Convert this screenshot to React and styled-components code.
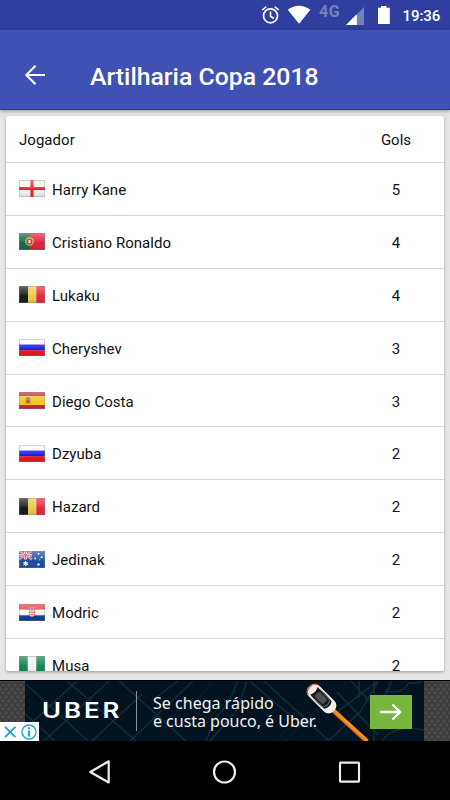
import React from "react";
import styled, { createGlobalStyle } from "styled-components";

const players = [
  { name: "Harry Kane", country: "england", goals: 5 },
  { name: "Cristiano Ronaldo", country: "portugal", goals: 4 },
  { name: "Lukaku", country: "belgium", goals: 4 },
  { name: "Cheryshev", country: "russia", goals: 3 },
  { name: "Diego Costa", country: "spain", goals: 3 },
  { name: "Dzyuba", country: "russia", goals: 2 },
  { name: "Hazard", country: "belgium", goals: 2 },
  { name: "Jedinak", country: "australia", goals: 2 },
  { name: "Modric", country: "croatia", goals: 2 },
  { name: "Musa", country: "nigeria", goals: 2 },
];

const flags = {
  england: (
    <>
      <rect width="26" height="17" fill="#f0f0f0" />
      <path d="M13 0v17M0 8.5h26" stroke="#f01c20" strokeWidth="3.2" />
    </>
  ),
  portugal: (
    <>
      <rect width="26" height="17" fill="#dc2038" />
      <rect width="10.5" height="17" fill="#106848" />
      <circle cx="10.5" cy="8.5" r="3.7" fill="none" stroke="#d8c04a" strokeWidth="1.3" />
      <path d="M8.5 6.3h4v3.2q0 2-2 2.3-2-.3-2-2.3z" fill="#d8283c" />
      <path d="M9.5 7.2h2v2.2l-1 1-1-1z" fill="#fff" />
    </>
  ),
  belgium: (
    <>
      <rect width="9" height="17" fill="#171717" />
      <rect x="9" width="8.3" height="17" fill="#ecca48" />
      <rect x="17.3" width="8.7" height="17" fill="#e52438" />
    </>
  ),
  russia: (
    <>
      <rect width="26" height="6" fill="#fbfbfb" />
      <rect y="5.5" width="26" height="6" fill="#1c1cec" />
      <rect y="11.3" width="26" height="5.7" fill="#ec1212" />
    </>
  ),
  spain: (
    <>
      <rect width="26" height="17" fill="#c8203a" />
      <rect y="4" width="26" height="9" fill="#f4c51e" />
      <path d="M6.3 7h5M7 6.5v5M11 6.5v5" stroke="#a98352" />
      <path d="M7.5 7.5h3V10q0 1.4-1.5 1.7Q7.5 11.4 7.5 10z" fill="#b8483c" />
      <path d="M7.8 6h2.5" stroke="#b8483c" strokeWidth="1.4" />
    </>
  ),
  australia: (
    <>
      <rect width="26" height="17" fill="#1c4c9c" />
      <path d="M0 0l13 8.5M13 0L0 8.5" stroke="#f1d6dc" strokeWidth="1.8" />
      <path d="M6.5 0v8.5M0 4.2h13" stroke="#f5e3e7" strokeWidth="2.6" />
      <path d="M6.5 0v8.5M0 4.2h13M0 0l13 8.5M13 0L0 8.5" stroke="#e0455a" strokeWidth="1" />
      <path d="M6.5 9.6l.8 1.7 1.8-.4-.8 1.6 1.2 1.3-1.8.1-.8 1.6-1-1.5-1.8.2.9-1.5-1.1-1.4 1.8-.1z" fill="#fff" />
      <circle cx="19.5" cy="2.8" r="1" fill="#e8f0ff" />
      <circle cx="16.2" cy="7.5" r="1" fill="#e8f0ff" />
      <circle cx="22.7" cy="6.2" r="1" fill="#e8f0ff" />
      <circle cx="20.7" cy="8.8" r=".6" fill="#e8f0ff" />
      <circle cx="19.5" cy="13.5" r="1.2" fill="#e8f0ff" />
    </>
  ),
  croatia: (
    <>
      <rect width="26" height="6" fill="#ed3a37" />
      <rect y="5.6" width="26" height="6" fill="#fafafa" />
      <rect y="11.3" width="26" height="5.7" fill="#103a94" />
      <path d="M10 5h6v5q-.5 2.5-3 3-2.5-.5-3-3z" fill="#f7dcdc" />
      <path d="M10.7 5v6M13 5v8M15.3 5v6" stroke="#e0343c" strokeWidth="1.3" strokeDasharray="1.4 1.1" />
      <path d="M9.5 4.5l1-1.5 1.3.8L13 2.7l1.2 1.1 1.3-.8 1 1.5z" fill="#7fa5c8" />
    </>
  ),
  nigeria: (
    <>
      <rect width="26" height="17" fill="#f0f0f0" />
      <rect width="8.7" height="17" fill="#12834e" />
      <rect x="17.3" width="8.7" height="17" fill="#12834e" />
    </>
  ),
};

function Flag({ country }) {
  return (
    <FlagIcon viewBox="0 0 26 17">
      <defs>
        <linearGradient id="gloss" x1="0" y1="0" x2="0" y2="1">
          <stop offset="0" stopColor="#fff" stopOpacity=".34" />
          <stop offset=".45" stopColor="#fff" stopOpacity=".12" />
          <stop offset=".6" stopColor="#fff" stopOpacity="0" />
          <stop offset="1" stopColor="#000" stopOpacity=".12" />
        </linearGradient>
      </defs>
      {flags[country]}
      <rect width="26" height="17" fill="url(#gloss)" />
      <rect x=".5" y=".5" width="25" height="16" fill="none" stroke="#888" strokeOpacity=".35" />
    </FlagIcon>
  );
}

function StatusIcons() {
  return (
    <svg width="150" height="30" viewBox="255 0 150 30" fill="none">
      <circle cx="270.5" cy="15.8" r="7" stroke="#fff" strokeWidth="1.7" />
      <path d="M262.3 10l4-3.4M278.7 10l-4-3.4M270.5 11.5v4.8l3.5 2.2" stroke="#fff" strokeWidth="1.6" />
      <path d="M287.7 9.7Q299 1.8 310.4 9.7L299 23.7z" fill="#fff" />
      <path d="M364 7v18h-18z" fill="#757fc0" />
      <path d="M356.8 14.3V25H346z" fill="#fff" />
      <path d="M379 7.8h2V6h5.5v1.8h3.3V24h-11.8V7.8z" fill="#fff" />
    </svg>
  );
}

function AdArt() {
  return (
    <MapArt viewBox="25 681 399 60" fill="none">
      <rect x="25" y="680" width="399" height="61" fill="#03131f" />
      <g stroke="#12313e" strokeWidth="1.3">
        <path d="M25 729l53-49M44 741l66-61M92 741l50-47M118 680l68 61M26 684l62 57M66 680l70 61M25 714l30 27M130 741l64-61M210 741l28-32 9-29M153 700l26-20" />
        <path d="M238 680q-8 24-23 39l-9 22M248 680l54 45M263 680l66 61M328 741l32-29 19-32M337 692l41 43M350 680l22 24M359 680v18M374 680v61M382 741q12-17 42-11M385 690q16 6 24-7h8l7-3M337 712l40-30M392 680l-10 22" />
      </g>
      <path d="M190 710l23-30M207 720l29-29M285 741l37-37M275 741l31-28M338 732h19v9M342 680l18 20" stroke="#0b222e" />
      <path d="M331.5 709l35 32" stroke="#b75c17" strokeWidth="4.6" />
      <path d="M331.5 708.500l36 32.500" stroke="#f98d26" strokeWidth="3.4" />
      <g transform="translate(321.6 698.600) rotate(45)">
        <rect x="-17.300" y="-7.500" width="34.600" height="15" rx="6.500" fill="#f3eeec" />
        <path d="M-12-7q-4.500 1-4.500 7t4.500 7" stroke="#e4502f" strokeWidth="1.2" />
        <path d="M-11-5.200Q-1-7 9-5.200q4 5.200 0 10.400Q-1 7-11 5.200-8 0-11-5.200z" fill="#191919" />
        <rect x="-7" y="-3.500" width="12" height="7" rx="2" fill="#4e4f51" />
        <path d="M7-4.500q3 4.500 0 9" stroke="#666" />
        <path d="M-9-5.600l16 .4M-9 5.600l16-.4" stroke="#ddd" strokeWidth=".6" />
      </g>
    </MapArt>
  );
}

export default function App() {
  return (
    <>
      <GlobalStyle />
      <Screen>
        <StatusBar>
          <Network>4G</Network>
          <StatusIcons />
          <Clock>19:36</Clock>
        </StatusBar>
        <AppBar>
          <svg width="22" height="22" viewBox="0 0 22 22" fill="none">
            <path d="M21 11H2.500M11.500 1.800L2.300 11l9.200 9.200" stroke="#fff" strokeWidth="2.1" />
          </svg>
          <Title>Artilharia Copa 2018</Title>
        </AppBar>
        <Content>
          <Card>
            <HeaderRow>
              <Label>Jogador</Label>
              <Goals>Gols</Goals>
            </HeaderRow>
            {players.map((player) => (
              <Row key={player.name}>
                <Flag country={player.country} />
                <Label>{player.name}</Label>
                <Goals>{player.goals}</Goals>
              </Row>
            ))}
          </Card>
        </Content>
        <Ad>
          <AdBanner>
            <AdArt />
            <Brand>UBER</Brand>
            <Divider />
            <Slogan>
              <SloganLine $spacing="0.03px">Se chega rápido</SloganLine>
              <SloganLine $spacing="-0.03px">e custa pouco, é Uber.</SloganLine>
            </Slogan>
            <AdButton>
              <svg width="24" height="18" viewBox="0 0 24 18" fill="none">
                <path d="M1 9h20M13.5 1.5L21 9l-7.5 7.5" stroke="#fff" strokeWidth="2.4" />
              </svg>
            </AdButton>
          </AdBanner>
          <AdChoices>
            <svg width="39" height="20" viewBox="0 0 39 20" fill="none" stroke="#12a5c7">
              <path d="M5 4.8l10.5 10.4M15.5 4.8L5 15.2" strokeWidth="1.7" />
              <circle cx="29" cy="10" r="7" strokeWidth="1.3" />
              <path d="M29 8.6v5.8M29 5.3v2" strokeWidth="2" />
            </svg>
          </AdChoices>
        </Ad>
        <NavBar>
          <svg width="24" height="26" viewBox="0 0 24 26" fill="none">
            <path d="M20.7 2.3v21.2L2.300 13z" stroke="#eee" strokeWidth="2.2" strokeLinejoin="round" />
          </svg>
          <svg width="26" height="26" viewBox="0 0 26 26" fill="none">
            <circle cx="12.5" cy="13" r="10.5" stroke="#eee" strokeWidth="2.2" />
          </svg>
          <svg width="24" height="26" viewBox="0 0 24 26" fill="none">
            <rect x="3" y="3.600" width="19" height="19" rx=".5" stroke="#eee" strokeWidth="2.1" />
          </svg>
        </NavBar>
      </Screen>
    </>
  );
}

const GlobalStyle = createGlobalStyle`
  * {
    box-sizing: border-box;
  }
  body {
    margin: 0;
    background: #000;
    font-family: Roboto, sans-serif;
  }
  svg {
    display: block;
    flex: none;
  }
`;
const Screen = styled.div`
  display: flex;
  flex-direction: column;
  width: 450px;
  height: 800px;
  overflow: hidden;
`;
const StatusBar = styled.div`
  position: relative;
  display: flex;
  justify-content: flex-end;
  height: 30px;
  padding-right: 10px;
  background: #303f9f;
`;
const Network = styled.span`
  position: absolute;
  left: 319px;
  top: 3px;
  color: #757fc0;
  font-size: 16px;
  line-height: 17px;
  font-weight: 700;
  letter-spacing: 0.6px;
`;
const Clock = styled.span`
  width: 38px;
  margin-left: -3px;
  color: #fff;
  font-size: 15px;
  line-height: 32px;
  font-weight: 500;
  letter-spacing: -0.1px;
  text-indent: 0.6px;
  white-space: nowrap;
`;
const AppBar = styled.header`
  position: relative;
  z-index: 1;
  display: flex;
  align-items: center;
  height: 80px;
  padding: 11px 0 0 24px;
  background: #3f51b5;
  border-bottom: 1px solid #1239a8;
  box-shadow: 0 1px 4px rgba(0, 0, 0, 0.35);
`;
const Title = styled.h1`
  margin: 3px 0 0 44px;
  color: #fff;
  font-size: 24.8px;
  font-weight: 500;
  line-height: 30px;
`;
const Content = styled.main`
  height: 570px;
  padding: 6px 6px 9px;
  background: #e6e6e6;
`;
const Card = styled.section`
  height: 555px;
  overflow: hidden;
  background: #fff;
  border-radius: 2px;
  box-shadow: 0 1px 3px rgba(0, 0, 0, 0.35);
`;
const Row = styled.div`
  display: flex;
  align-items: center;
  height: 52.9px;
  padding: 1px 13px 0;
  border-bottom: 1px solid #d5d5d5;
`;
const HeaderRow = styled(Row)`
  height: 47px;
`;
const FlagIcon = styled.svg`
  width: 26px;
  height: 17px;
  margin: 0 7px 1px 0;
`;
const Label = styled.span`
  flex: 1;
  padding-top: 1px;
  color: #111;
  font-size: 15px;
  line-height: 20px;
  letter-spacing: 0.04px;
`;
const Goals = styled.span`
  width: 70px;
  padding-top: 1px;
  color: #111;
  font-size: 15px;
  line-height: 20px;
  text-align: center;
`;
const Ad = styled.aside`
  position: relative;
  display: flex;
  justify-content: center;
  height: 61px;
  padding-right: 1px;
  background-color: #3b3b3b;
  background-image: radial-gradient(circle, #4c4c4c 1.2px, transparent 2.2px),
    radial-gradient(circle, #4c4c4c 1.2px, transparent 2.2px);
  background-size: 6px 8px;
  background-position: 0 0, 3px 4px;
  border-top: 1px solid #000;
`;
const AdBanner = styled.div`
  position: relative;
  display: flex;
  align-items: center;
  width: 399px;
  height: 60px;
`;
const MapArt = styled.svg`
  position: absolute;
  inset: 0;
  width: 399px;
  height: 60px;
`;
const Brand = styled.span`
  position: relative;
  width: 94px;
  margin-left: 17px;
  color: #fff;
  font: 600 21px/24px Inter, sans-serif;
  letter-spacing: 2.4px;
  transform: scaleX(1.23);
  transform-origin: left;
`;
const Divider = styled.span`
  position: relative;
  width: 1px;
  height: 40px;
  background: #899197;
`;
const Slogan = styled.div`
  position: relative;
  flex: 1;
  margin: 1px 0 0 16px;
`;
const SloganLine = styled.p`
  margin: 0;
  color: #f2f4f5;
  font: 400 16px/18px "Noto Sans", sans-serif;
  letter-spacing: ${(props) => props.$spacing};
  white-space: nowrap;
`;
const AdButton = styled.div`
  position: relative;
  display: flex;
  align-items: center;
  justify-content: center;
  width: 42px;
  height: 34px;
  margin: 1px 12.5px 0 0;
  background: #76b83f;
`;
const AdChoices = styled.div`
  position: absolute;
  left: 0;
  bottom: 0;
  width: 39px;
  height: 19px;
  background: #fff;
`;
const NavBar = styled.nav`
  display: flex;
  justify-content: space-between;
  align-items: center;
  height: 59px;
  padding: 3px 89px 0 88px;
  background: #000;
`;
